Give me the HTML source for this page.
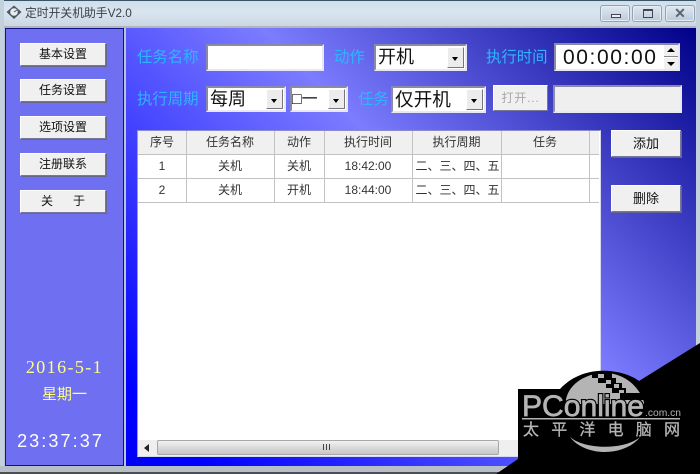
<!DOCTYPE html>
<html><head><meta charset="utf-8"><style>
*{box-sizing:border-box}
html,body{margin:0;padding:0}
body{width:700px;height:474px;position:relative;overflow:hidden;background:#b8c4ce;font-family:"Liberation Sans","Noto Sans CJK SC",sans-serif}
#w{position:absolute;left:0;top:0;width:700px;height:474px;filter:blur(.3px)}
.a{position:absolute}
.t{position:absolute;white-space:nowrap;text-align:center}
.btn{position:absolute;background:#f0f0f0;border:1px solid;border-color:#fff #77779a #77779a #fff;box-shadow:1px 1px 0 #66668a;color:#111;font-size:12px;text-align:center}
.lbl{position:absolute;color:#2cb6ff;font-size:15.4px;line-height:20px;white-space:nowrap}
.inp{position:absolute;background:#fff;border:2px solid;border-color:#8a8aa8 #e8e8f4 #e8e8f4 #8a8aa8;color:#111;font-size:18px;white-space:nowrap;padding-left:2px}
.arr{position:absolute;top:1px;bottom:1px;right:1px;width:17px;background:#ececec;border:1px solid;border-color:#fff #777 #777 #fff}
.arr:after{content:"";position:absolute;left:4px;top:9px;border:3.5px solid transparent;border-top:4px solid #000;border-bottom:0}
.wb{position:absolute;top:5px;width:30px;height:17px;border:1px solid #8fa3b5;border-radius:3px;background:linear-gradient(#dfe8f1,#bccbda);box-shadow:inset 0 0 0 1px #e6eef5}
.c{position:absolute;top:0;text-align:center;font-size:12px;color:#333;line-height:23px;white-space:nowrap}
.v{position:absolute;width:1px;top:131px;height:71px;background:#c2c2c2}
.h{position:absolute;left:138px;width:461px;height:1px;background:#c2c2c2}
</style></head><body><div id="w">
<div class="a" style="left:0;top:0;width:700px;height:27px;background:linear-gradient(#cfdfeb,#d9e5ef 40%,#c9d7e3);border-top:1px solid #3b5566"></div>
<div class="a" style="left:0;top:26px;width:700px;height:2px;background:#b4b4bc"></div>
<div class="a" style="left:0;top:0;width:4px;height:474px;background:#c3d1dd"></div>
<div class="a" style="left:696px;top:0;width:4px;height:474px;background:#c3d1dd"></div>
<div class="a" style="left:0;top:466px;width:700px;height:6px;background:#b6bfc6"></div>
<div class="a" style="left:0;top:472px;width:700px;height:2px;background:#4a4f55"></div>
<svg class="a" style="left:5px;top:4px" width="18" height="18" viewBox="0 0 18 18"><path d="M9 1.5 L16.5 8 L9 15 L1.5 8Z" fill="#4c5660"/><circle cx="9" cy="8" r="3.8" fill="#e8ecef"/><path d="M9 8 L12 6" stroke="#555" stroke-width="1"/></svg>
<div class="t" style="left:25px;top:6px;font-size:11.8px;line-height:15px;color:#3a3f44">定时开关机助手V2.0</div>
<div class="wb" style="left:600px"><div class="a" style="left:10px;top:8px;width:10px;height:4px;border:1px solid #445;background:#eef"></div></div>
<div class="wb" style="left:632px"><div class="a" style="left:10px;top:3px;width:10px;height:9px;border:1px solid #445;border-top-width:2px"></div></div>
<div class="wb" style="left:665px"><div class="t" style="left:0;width:28px;top:0;font-size:14px;line-height:15px;color:#5a6570;font-weight:bold">✕</div></div>

<div class="a" style="left:5px;top:28px;width:119px;height:438px;background:#6f6ff2;border:1px solid #10108a"></div>
<div class="a" style="left:126px;top:28px;width:570px;height:438px;background:linear-gradient(45deg,#0000f5 0%,#0000ff 8%,#7c7cff 57%,#000088 100%)"></div>

<div class="btn" style="left:20px;top:43px;width:86px;height:23px;line-height:21px">基本设置</div>
<div class="btn" style="left:20px;top:79px;width:86px;height:23px;line-height:21px">任务设置</div>
<div class="btn" style="left:20px;top:116px;width:86px;height:23px;line-height:21px">选项设置</div>
<div class="btn" style="left:20px;top:153px;width:86px;height:23px;line-height:21px">注册联系</div>
<div class="btn" style="left:20px;top:190px;width:86px;height:23px;line-height:21px">关&nbsp;&nbsp;&nbsp;&nbsp;&nbsp;&nbsp;于</div>

<div class="t" style="left:5px;width:119px;top:357px;font-family:'Liberation Serif',serif;font-size:18px;line-height:20px;color:#ffff88;letter-spacing:1.4px">2016-5-1</div>
<div class="t" style="left:5px;width:119px;top:385px;font-size:15px;line-height:20px;color:#ffff88">星期一</div>
<div class="t" style="left:1px;width:119px;top:430px;font-size:18px;line-height:22px;color:#fff;letter-spacing:2.1px">23:37:37</div>

<div class="lbl" style="left:137px;top:48px">任务名称</div>
<div class="inp" style="left:206px;top:44px;width:118px;height:27px"></div>
<div class="lbl" style="left:334px;top:48px">动作</div>
<div class="inp" style="left:374px;top:44px;width:93px;height:27px;line-height:23px">开机<div class="arr"></div></div>
<div class="lbl" style="left:486px;top:48px">执行时间</div>
<div class="inp" style="left:554px;top:43px;width:126px;height:28px;font-size:21px;line-height:25px;padding-left:7px;letter-spacing:1.6px">00:00:00
<div class="a" style="right:0;top:0;width:14px;height:12px;background:#f0f0f0;border-bottom:1px solid #888"><div class="a" style="left:3px;top:3px;border:4px solid transparent;border-bottom:4px solid #000;border-top:0"></div></div>
<div class="a" style="right:0;top:13px;width:14px;height:11px;background:#f0f0f0"><div class="a" style="left:3px;top:4px;border:4px solid transparent;border-top:4px solid #000;border-bottom:0"></div></div>
</div>
<div class="lbl" style="left:137px;top:90px">执行周期</div>
<div class="inp" style="left:206px;top:86px;width:80px;height:26px;line-height:23px">每周<div class="arr"></div></div>
<div class="inp" style="left:290px;top:86px;width:58px;height:26px;line-height:23px;font-size:16px;padding-left:0">□一<div class="arr"></div></div>
<div class="lbl" style="left:358px;top:90px">任务</div>
<div class="inp" style="left:391px;top:86px;width:95px;height:27px;line-height:24px;font-size:18.6px">仅开机<div class="arr"></div></div>
<div class="btn" style="left:493px;top:85px;width:55px;height:26px;line-height:24px;color:#a8a8a8;font-size:12px;letter-spacing:.8px;box-shadow:none">打开...</div>
<div class="inp" style="left:553px;top:85px;width:129px;height:28px;background:#efefef"></div>

<div class="a" style="left:137px;top:130px;width:464px;height:327px;background:#fff;border:1px solid #d8d8f0;border-left-color:#9a9ad8;border-top-color:#8a8ad0"></div>
<div class="a" style="left:138px;top:131px;width:461px;height:23px;background:#f0f0f0"></div>
<div class="a" style="left:138px;top:131px;width:461px;height:23px;font-size:12px">
<div class="c" style="left:0;width:48px">序号</div><div class="c" style="left:48px;width:88px">任务名称</div><div class="c" style="left:136px;width:50px">动作</div><div class="c" style="left:186px;width:88px">执行时间</div><div class="c" style="left:274px;width:89px">执行周期</div><div class="c" style="left:363px;width:88px">任务</div>
</div>
<div class="a" style="left:138px;top:155px;width:461px;height:23px"><div class="c" style="left:0;width:48px">1</div><div class="c" style="left:48px;width:88px">关机</div><div class="c" style="left:136px;width:50px">关机</div><div class="c" style="left:186px;width:88px">18:42:00</div><div class="c" style="left:275px;width:89px">二、三、四、五</div></div>
<div class="a" style="left:138px;top:179px;width:461px;height:23px"><div class="c" style="left:0;width:48px">2</div><div class="c" style="left:48px;width:88px">关机</div><div class="c" style="left:136px;width:50px">开机</div><div class="c" style="left:186px;width:88px">18:44:00</div><div class="c" style="left:275px;width:89px">二、三、四、五</div></div>
<div class="h" style="top:154px"></div><div class="h" style="top:178px"></div><div class="h" style="top:202px"></div>
<div class="v" style="left:186px"></div><div class="v" style="left:274px"></div><div class="v" style="left:324px"></div><div class="v" style="left:412px"></div><div class="v" style="left:501px"></div><div class="v" style="left:589px"></div>

<div class="a" style="left:138px;top:440px;width:462px;height:16px;background:#efefef"></div>
<div class="a" style="left:144px;top:444px;border:4px solid transparent;border-right:5px solid #222;border-left:0"></div>
<div class="a" style="left:157px;top:440px;width:342px;height:15px;background:linear-gradient(#f2f2f2,#d8d8d8 55%,#c8c8c8);border:1px solid #a8a8a8;border-radius:2px"></div>
<div class="a" style="left:323px;top:444px;width:8px;height:6px;background:repeating-linear-gradient(90deg,#444 0 1px,transparent 1px 3px)"></div>

<div class="btn" style="left:611px;top:130px;width:70px;height:27px;line-height:25px;font-size:13px">添加</div>
<div class="btn" style="left:611px;top:185px;width:70px;height:27px;line-height:25px;font-size:13px">删除</div>

<svg class="a" style="left:0;top:0" width="700" height="474" viewBox="0 0 700 474">
<path d="M700 343 L639 381 C625 370 585 362 560 389 L518 389 L518 459 L496 474 L700 474Z" fill="#000"/>
<path d="M566 399 C570 382 588 373 605 373 C622 373 638 384 644 402 L644 404 L566 404Z" fill="#b4b4b4"/>
<g fill="#000"><rect x="592" y="372" width="20" height="6"/><rect x="598" y="378" width="18" height="5"/><rect x="606" y="383" width="16" height="5"/><rect x="612" y="388" width="14" height="5"/><rect x="620" y="393" width="26" height="7"/></g>
<g fill="#b4b4b4"><rect x="598" y="374" width="6" height="4"/><rect x="606" y="380" width="5" height="4"/><rect x="614" y="384" width="5" height="4"/><rect x="619" y="390" width="5" height="3"/></g>
<rect x="521" y="404" width="126" height="14" fill="#000"/>
<path d="M570 437 C585 457 625 457 640 437 C625 450 585 450 570 437Z" fill="#b4b4b4"/>
<rect x="522" y="418" width="158" height="1.5" fill="#b4b4b4"/>
<text x="522" y="416" font-family="Liberation Sans" font-size="30" fill="#b4b4b4" stroke="#000" stroke-width="3" paint-order="stroke" textLength="122" lengthAdjust="spacingAndGlyphs">PConline</text>
<text x="522" y="416" font-family="Liberation Sans" font-size="30" fill="#b4b4b4" stroke="#b4b4b4" stroke-width=".7" textLength="122" lengthAdjust="spacingAndGlyphs">PConline</text>
<text x="645" y="416" font-family="Liberation Sans" font-size="10" fill="#b4b4b4" textLength="36" lengthAdjust="spacingAndGlyphs">.com.cn</text>
<text x="523" y="435" font-family="Noto Sans CJK SC" font-size="16" fill="#b4b4b4" stroke="#b4b4b4" stroke-width=".3" letter-spacing="12.2">太平洋电脑网</text>
</svg>
</div></body></html>
